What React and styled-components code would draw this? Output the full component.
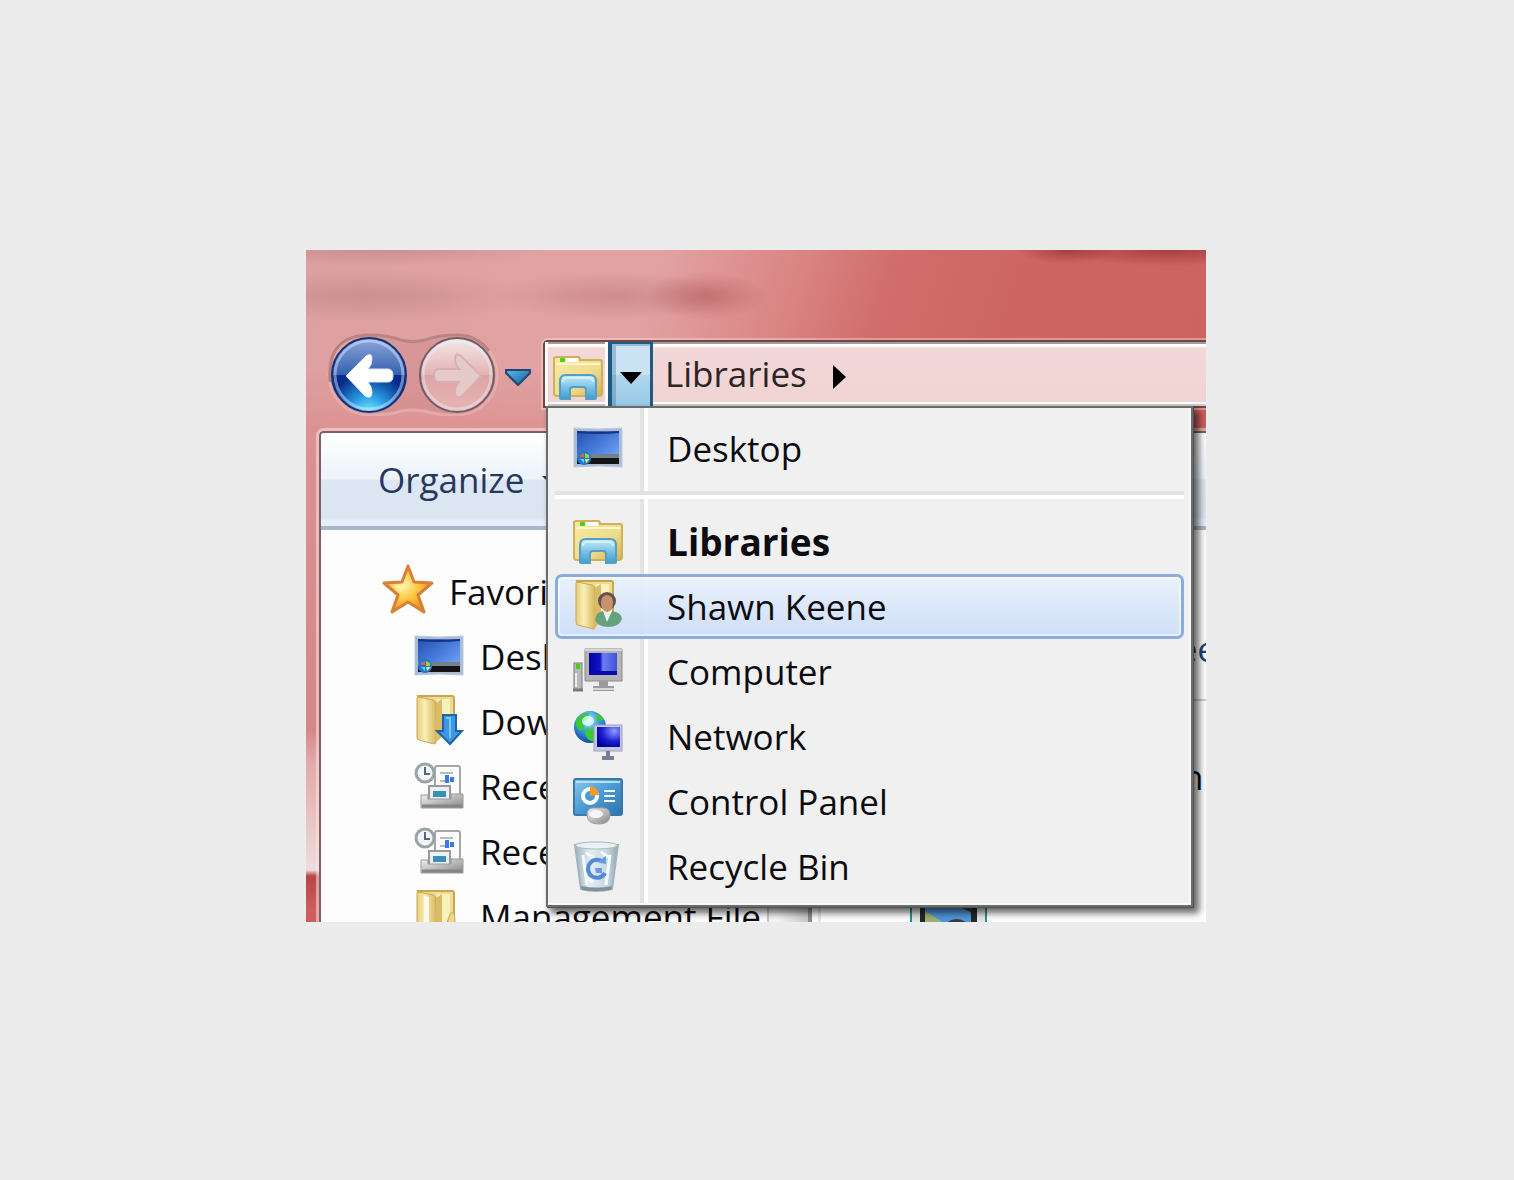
import React from "react";
import styled, { createGlobalStyle, css } from "styled-components";

const GlobalStyle = createGlobalStyle`
  *, *::before, *::after { box-sizing: border-box; }
  body { margin: 0; background: #ececec; }
  button { font: inherit; color: inherit; border: 0; padding: 0; background: none; text-align: left; }
`;

const Page = styled.main`
  display: flex;
  height: 100vh;
  padding: 250px 308px 258px 306px;
  font-family: "Open Sans", "Noto Sans", sans-serif;
  font-size: 35px;
  line-height: 48px;
  color: #0c0c10;
`;

const Explorer = styled.section`
  flex: 1;
  min-width: 0;
  display: flex;
  flex-direction: column;
  overflow: hidden;
  background:
    radial-gradient(ellipse 170px 26px at 60px 46px, rgba(140, 90, 90, 0.24), transparent),
    radial-gradient(ellipse 120px 24px at 310px 46px, rgba(150, 75, 75, 0.26), transparent),
    radial-gradient(ellipse 60px 24px at 400px 46px, rgba(150, 50, 50, 0.34), transparent),
    radial-gradient(ellipse 170px 16px at 70px 0, rgba(140, 90, 90, 0.24), transparent),
    radial-gradient(ellipse 50px 14px at 760px 0, rgba(120, 20, 20, 0.45), transparent),
    radial-gradient(ellipse 110px 16px at 860px 0, rgba(120, 20, 20, 0.45), transparent),
    linear-gradient(180deg, transparent 120px, rgba(200, 70, 70, 0.16) 180px, rgba(190, 90, 90, 0.35) 480px,
      rgba(226, 170, 170, 0.7) 510px, #eedcdc 620px, #b84646 626px, #cc5e5e 660px),
    linear-gradient(108deg, #dea0a0 0, #e2a2a2 340px, #d98382 480px, #d06c69 570px, #cd6663 700px, #c9605c 100%);
`;

const Toolbar = styled.nav`
  display: flex;
  align-items: center;
  padding: 82px 0 0 20px;
`;

const Travel = styled.div`
  display: grid;
  grid-template-columns: 88px 88px;
  width: 178px;
  height: 84px;
  position: relative;
`;

const TravelPlate = styled.svg`
  position: absolute;
  inset: 0;
`;

const TravelButton = styled.button`
  position: relative;
  height: 84px;
  svg { display: block; }
`;

const HistoryButton = styled.button`
  display: grid;
  place-items: center;
  width: 26px;
  height: 32px;
  margin: 6px 13px 0 0;
`;

const AddressBar = styled.div`
  position: relative;
  flex: 1;
  display: flex;
  height: 68px;
  border: solid #6f4747;
  border-width: 2px 0 2px 2px;
  border-radius: 5px 0 0 0;
  box-shadow: 0 0 0 2px rgba(255, 225, 225, 0.4);
  background: linear-gradient(#a39c9d 2px, #fff 2px 4px, #f3d8d9 6px, #f0d3d3 60px, #fff 60px 62px, #d3cccc 62px);
`;

const LocationIcon = styled.div`
  display: grid;
  place-items: center;
  width: 63px;
  padding: 7px 0 0 2px;
  border: solid #fff;
  border-width: 0 3px;
`;

const RootsButton = styled.button`
  display: grid;
  place-items: center;
  width: 45px;
  padding-top: 5px;
  border: solid #205a80;
  border-width: 2px 3px 0 4px;
  background: linear-gradient(#c9e3f5 50%, #b0d7ee 50%, #98cae8);
  box-shadow: inset 4px 2px 0 rgba(60, 110, 145, 0.35);
`;

const Crumb = styled.button`
  padding: 0 26px 0 12px;
  color: #2a2424;
`;

const CrumbArrow = styled.button`
  display: grid;
  place-items: center;
  width: 14px;
  padding-top: 5px;
`;

const Menu = styled.div`
  position: absolute;
  z-index: 2;
  top: 64px;
  left: 1px;
  width: 647px;
  padding: 8px 7px 6px;
  border: 2px solid #6b6d6d;
  background:
    linear-gradient(90deg, transparent 92px, #e3e3e3 92px 96px, #fff 96px 100px, transparent 100px),
    #f0f0f0;
  box-shadow: inset -2px -2px 0 #f8f8f8, 1px 1px 0 0 #4e5050, 5px 5px 7px 1px rgba(0, 0, 0, 0.6);
`;

const MenuItem = styled.button`
  display: flex;
  align-items: center;
  gap: 44px;
  width: 100%;
  height: 65px;
  padding-left: 15px;
  border: 3px solid transparent;
  border-radius: 7px;
  ${(p) =>
    p.$current &&
    css`
      font-size: 37px;
      font-weight: 700;
    `}
  ${(p) =>
    p.$hot &&
    css`
      border-color: #8aaddc;
      background: linear-gradient(rgba(233, 241, 253, 0.9), rgba(203, 221, 248, 0.92)) padding-box;
      box-shadow: inset 0 0 0 2px rgba(255, 255, 255, 0.5);
    `}
`;

const Separator = styled.hr`
  height: 8px;
  margin: 10px 0;
  border: 0;
  background: linear-gradient(#e2e2e2 4px, #fff 4px);
`;

const Frame = styled.div`
  flex: 1;
  min-height: 0;
  display: flex;
  flex-direction: column;
  margin: 15px 0 0 13px;
  border: solid #7b6161;
  border-width: 2px 0 0 2px;
  border-radius: 5px 0 0 0;
  box-shadow: 0 0 0 3px rgba(255, 225, 225, 0.55);
  background: #fdfdfd;
  overflow: hidden;
`;

const CommandBar = styled.div`
  flex: none;
  display: flex;
  align-items: center;
  height: 97px;
  padding: 0 0 0 57px;
  border-bottom: 4px solid #a9b6cc;
  color: #27375c;
  background: linear-gradient(#fff, #ecf3fb 46px, #dde7f3 47px, #dbe4f1 84px, #e6eefa 88px);
`;

const CommandButton = styled.button`
  display: flex;
  align-items: center;
  gap: 18px;
`;

const Columns = styled.div`
  flex: 1;
  min-height: 0;
  display: flex;
  overflow: hidden;
`;

const Sidebar = styled.div`
  width: 491px;
  display: flex;
  overflow: hidden;
`;

const Places = styled.div`
  flex: 1;
  min-width: 0;
  padding-top: 29px;
  border-right: 2px solid #c9c9cc;
`;

const Place = styled.a`
  display: flex;
  align-items: center;
  gap: 16px;
  height: 65px;
  padding-left: ${(p) => (p.$nested ? 93 : 62)}px;
  color: #0c0c10;
  text-decoration: none;
  white-space: nowrap;
`;

const ScrollTrack = styled.div`
  width: 43px;
  border-right: 4px solid #8d8d90;
  background: linear-gradient(90deg, #f4f4f5 8px, #c8c8cc);
`;

const Pane = styled.div`
  flex: 1;
  min-width: 0;
  display: flex;
  flex-direction: column;
  margin-left: 6px;
  border-left: 3px solid #dfe8f4;
`;

const PaneRow = styled.div`
  flex: none;
  display: flex;
  align-items: flex-end;
  height: ${(p) => p.$height}px;
  padding: 0 0 ${(p) => p.$gap}px 340px;
  color: ${(p) => (p.$heading ? "#1f4374" : "#0c0c10")};
  border-bottom: ${(p) => (p.$heading ? "2px solid #c3d0e4" : "0")};
  white-space: nowrap;
`;

const Thumb = styled.div`
  padding: 106px 0 0 89px;
`;

const IconSvg = styled.svg`
  flex: none;
  display: block;
  overflow: visible;
`;

const Icon = ({ children }) => (
  <IconSvg width="50" height="50" viewBox="0 0 50 50" aria-hidden="true">
    {children}
  </IconSvg>
);

const Gradients = () => (
  <IconSvg width="0" height="0" aria-hidden="true">
    <defs>
      <linearGradient id="folder" x1="0" y1="0" x2="1" y2="1">
        <stop offset="0" stopColor="#f6e9a4" />
        <stop offset=".6" stopColor="#efdd8c" />
        <stop offset="1" stopColor="#d6b04c" />
      </linearGradient>
      <linearGradient id="stand" x1="0" y1="0" x2="0" y2="1">
        <stop offset="0" stopColor="#c8ecfa" />
        <stop offset=".5" stopColor="#7fc3e6" />
        <stop offset="1" stopColor="#3f9dd2" />
      </linearGradient>
      <linearGradient id="flap" x1="0" y1="0" x2="1" y2="0">
        <stop offset="0" stopColor="#e6cd7c" />
        <stop offset=".4" stopColor="#f9efb4" />
        <stop offset="1" stopColor="#d7b863" />
      </linearGradient>
      <linearGradient id="wallpaper" x1="0" y1="0" x2="1" y2="1">
        <stop offset="0" stopColor="#2450b0" />
        <stop offset=".5" stopColor="#4a7edc" />
        <stop offset="1" stopColor="#7db2fa" />
      </linearGradient>
      <linearGradient id="crt" x1="0" y1="0" x2="1" y2="0">
        <stop offset="0" stopColor="#0404a4" />
        <stop offset=".4" stopColor="#1212c8" />
        <stop offset=".5" stopColor="#6a80f0" />
        <stop offset="1" stopColor="#4050dc" />
      </linearGradient>
      <radialGradient id="netcrt" cx=".75" cy=".2" r=".9">
        <stop offset="0" stopColor="#8c9cff" />
        <stop offset=".6" stopColor="#1c1ccc" />
        <stop offset="1" stopColor="#0000a0" />
      </radialGradient>
      <linearGradient id="metal" x1="0" y1="0" x2="1" y2="1">
        <stop offset="0" stopColor="#f2f2f2" />
        <stop offset="1" stopColor="#868686" />
      </linearGradient>
      <radialGradient id="globe" cx=".45" cy=".3" r=".75">
        <stop offset="0" stopColor="#b8f0ff" />
        <stop offset=".45" stopColor="#3a9be0" />
        <stop offset="1" stopColor="#123c9c" />
      </radialGradient>
      <linearGradient id="panel" x1="0" y1="0" x2="1" y2="1">
        <stop offset="0" stopColor="#8cc8ec" />
        <stop offset=".5" stopColor="#4a9ad4" />
        <stop offset="1" stopColor="#2e72b0" />
      </linearGradient>
      <linearGradient id="glass" x1="0" y1="0" x2="1" y2="0">
        <stop offset="0" stopColor="#9fb2bc" />
        <stop offset=".35" stopColor="#e2edf2" />
        <stop offset=".75" stopColor="#c6d8e0" />
        <stop offset="1" stopColor="#90a6b0" />
      </linearGradient>
      <radialGradient id="gold" cx=".4" cy=".42" r=".55">
        <stop offset="0" stopColor="#fff6a8" />
        <stop offset=".6" stopColor="#fcc23c" />
        <stop offset="1" stopColor="#f0962a" />
      </radialGradient>
      <linearGradient id="blueTop" x1="0" y1="0" x2="0" y2="1">
        <stop offset="0" stopColor="#8fa6dc" />
        <stop offset="1" stopColor="#3560ae" />
      </linearGradient>
      <radialGradient id="blueLow" gradientUnits="userSpaceOnUse" cx="43" cy="82" r="46">
        <stop offset="0" stopColor="#7cf0ff" />
        <stop offset=".4" stopColor="#2c9ce6" />
        <stop offset=".9" stopColor="#052c88" />
      </radialGradient>
      <linearGradient id="pinkTop" x1="0" y1="0" x2="0" y2="1">
        <stop offset="0" stopColor="#f6e8e8" />
        <stop offset="1" stopColor="#e2b2b2" />
      </linearGradient>
      <linearGradient id="pinkLow" x1="0" y1="0" x2="0" y2="1">
        <stop offset="0" stopColor="#cf9496" />
        <stop offset="1" stopColor="#eab4b4" />
      </linearGradient>
      <linearGradient id="chevron" x1="0" y1="0" x2="1" y2="1">
        <stop offset="0" stopColor="#58bce4" />
        <stop offset="1" stopColor="#155a9c" />
      </linearGradient>
    </defs>
  </IconSvg>
);

const LibrariesIcon = () => (
  <Icon>
    <path d="M1 9V6q0-2 2-2h22q2 0 2 3h20q2 0 2 2v31q0 3-3 3H4q-3 0-3-3z" fill="url(#folder)" stroke="#cdb25a" strokeWidth="2" />
    <path d="M3 11h44" stroke="#fff8cc" strokeWidth="2" />
    <rect x="13" y="5" width="12" height="4" fill="#fff" />
    <rect x="7" y="5" width="5" height="4" rx="1" fill="#4bd21c" />
    <path d="M7 45V28q0-6 6-6h24q6 0 6 6v17q0 1-1 1H33V37q0-3-3-3H20q-3 0-3 3v9H8q-1 0-1-1z" fill="url(#stand)" stroke="#559fc6" strokeWidth="2" />
    <path d="M10 29q0-4 4-4h22q4 0 4 4" fill="none" stroke="#d4f0fc" strokeWidth="2" />
  </Icon>
);

const DesktopIcon = () => (
  <Icon>
    <path d="M1 4q24 2 48 0v39q-24-2-48 0z" fill="#a9bcd6" stroke="#bdc9dc" strokeWidth="1" />
    <path d="M4 7q21 1 42 0v33H4z" fill="url(#wallpaper)" />
    <path d="M4 7q21 1 42 0v2q-21 2-42 0z" fill="#12348a" />
    <path d="M4 30h42v4H4z" fill="#77818a" />
    <path d="M4 34h42v6H4z" fill="#141414" />
    <circle cx="11" cy="34" r="7" fill="#1f78d0" />
    <path d="M7 31l4-2v4H7z" fill="#f06028" />
    <path d="M12 29l4 2v3h-4z" fill="#8cd84c" />
    <path d="M7 35h4v4z" fill="#5ad0ff" />
    <path d="M12 35h5l-4 4z" fill="#ffe05c" />
  </Icon>
);

const FolderShape = () => (
  <>
    <path d="M4 -1h34q2 0 2 2v36H20z" fill="#efdc92" stroke="#c9a551" strokeWidth="2" />
    <path d="M23 2h13v30H23z" fill="#f9f1bc" />
    <path d="M4 0l15 3q3 1 3 4v38q0 2-2 2L5 43q-2 0-2-3V1q0-1 1-1z" fill="url(#flap)" stroke="#cba751" strokeWidth="1" />
    <path d="M22 6l6-4v38l-7 6z" fill="#d9bb68" />
  </>
);

const UserIcon = () => (
  <Icon>
    <FolderShape />
    <path d="M22 38q1-8 8-9h9q9 1 10 8-3 8-14 8-10 0-13-7z" fill="#67a07c" />
    <path d="M30 29l4 11 5-11z" fill="#e6f2ee" />
    <circle cx="34" cy="19" r="9" fill="#66544a" />
    <path d="M28 20q0-6 6-7 6 1 6 7 0 9-6 10-6-1-6-10z" fill="#c7936c" />
  </Icon>
);

const DownloadsIcon = () => (
  <Icon>
    <FolderShape />
    <path d="M29 18h13v16h6L36 47 23 34h6z" fill="#3c98e4" stroke="#2263a6" strokeWidth="2" />
    <path d="M32 21h4v20" fill="none" stroke="#7cc8fa" strokeWidth="2" />
  </Icon>
);

const ComputerIcon = () => (
  <Icon>
    <rect x="1" y="16" width="8" height="27" fill="#b9b9b9" stroke="#7d7d7d" />
    <rect x="3" y="17" width="4" height="5" fill="#46d012" />
    <path d="M3 26v14" stroke="#eee" strokeWidth="2" />
    <path d="M0 43h10" stroke="#777" strokeWidth="3" />
    <path d="M12 2h37v32H12z" fill="#b4b4b4" stroke="#8a8a8a" />
    <path d="M12 3h37" stroke="#d6d6d6" strokeWidth="2" />
    <rect x="16" y="6" width="28" height="22" fill="url(#crt)" />
    <path d="M16 24h28v4H16z" fill="#0c0cac" />
    <path d="M26 34h9v5h6v5H20v-5h6z" fill="#9c9c9c" />
    <path d="M20 42h21" stroke="#d8d8d8" strokeWidth="2" />
  </Icon>
);

const NetworkIcon = () => (
  <Icon>
    <circle cx="17" cy="15" r="16" fill="url(#globe)" />
    <path d="M3 8q6-8 13-7l-1 6-6 4 3 4-5 4q-5-4-4-11zM13 16l8 1v13q-8-2-9-9zM23 1q6 2 8 7l-7 1z" fill="#3bc93a" />
    <ellipse cx="15" cy="9" rx="6" ry="5" fill="#e2ffff" opacity=".8" />
    <rect x="21" y="13" width="28" height="26" fill="#c4c8de" stroke="#9a9fc0" />
    <rect x="24" y="15" width="23" height="20" fill="url(#netcrt)" />
    <path d="M33 39h4v5h4v4H29v-4h4z" fill="#777c9c" />
  </Icon>
);

const ControlPanelIcon = () => (
  <Icon>
    <rect x="1" y="2" width="48" height="36" rx="2" fill="url(#panel)" stroke="#3a78aa" strokeWidth="2" />
    <path d="M3 5h44" stroke="#b6def4" strokeWidth="2" />
    <circle cx="17" cy="19" r="7" fill="#4a9ad4" stroke="#fff" strokeWidth="4" />
    <path d="M17 19V9a10 10 0 0 1 9 9z" fill="#f59a26" />
    <path d="M31 14h11M31 19h11M31 24h11" stroke="#fff" strokeWidth="2" />
    <path d="M14 38q0-7 6-7h10q7 0 7 7 0 9-11 9-12 0-12-9z" fill="url(#metal)" stroke="#a2a2a2" />
    <ellipse cx="23" cy="37" rx="7" ry="4" fill="#f6f6f6" />
  </Icon>
);

const RecycleIcon = () => (
  <Icon>
    <path d="M2 3h43l-6 44q-16 4-31 0z" fill="url(#glass)" stroke="#a3b3bb" strokeWidth="2" />
    <path d="M2 3q4-3 21-3t22 3q-3 4-22 4T2 3z" fill="#e9f0f2" stroke="#a9b7be" strokeWidth="1" />
    <path d="M10 13l4 30M37 13l-4 30M13 11l8 5M28 10l7 5M14 36l6 4" stroke="#f4fafc" strokeWidth="3" />
    <path d="M8 44q16 3 31 0l-1 4q-15 2-29 0z" fill="#7f929c" />
    <path d="M30 20a9 9 0 1 0 2 11" fill="none" stroke="#5587da" strokeWidth="4" />
    <path d="M24 20l9 2v-8zM22 26h7v5h-6z" fill="#6b98e2" />
  </Icon>
);

const StarIcon = () => (
  <Icon>
    <path d="M25 -1l6 16 18 1-14 12 6 17-16-10-16 10 6-17L1 16l18-1z" fill="url(#gold)" stroke="#d98038" strokeWidth="3" strokeLinejoin="round" />
    <path d="M25 5l-4 13-12 1 9 7z" fill="#fff4ac" opacity=".6" />
  </Icon>
);

const RecentIcon = () => (
  <Icon>
    <rect x="21" y="4" width="25" height="36" rx="2" fill="#fbfbfb" stroke="#a6a6a6" strokeWidth="2" />
    <path d="M26 11h13M26 19h6" stroke="#bababa" strokeWidth="2" />
    <path d="M33 13v8M38 15v5" stroke="#3a78ec" strokeWidth="4" />
    <rect x="15" y="24" width="21" height="16" fill="#e9f1f6" stroke="#999" strokeWidth="2" />
    <path d="M19 29h13v6H19z" fill="#3a90b8" />
    <path d="M7 33h7v4h23v-5h12v14H7z" fill="url(#metal)" stroke="#9a9a9a" />
    <path d="M8 44h40" stroke="#858585" strokeWidth="3" />
    <circle cx="11" cy="11" r="9" fill="#f1f6f8" stroke="#9ca3a6" strokeWidth="3" />
    <path d="M11 5v7h5" fill="none" stroke="#4e6a84" strokeWidth="2" />
  </Icon>
);

const FolderIcon = () => (
  <Icon>
    <FolderShape />
    <path d="M10 4l5 1v34l-5-6z" fill="#fffbe8" />
    <path d="M36 22q5-6 5 8v14H29z" fill="#ecd784" stroke="#cba751" />
  </Icon>
);

const Circle = ({ top, low, rim }) => (
  <>
    <circle cx="43" cy="43" r="37" fill={`url(#${low})`} />
    <path d="M6 43a37 37 0 0 1 74 0z" fill={`url(#${top})`} />
    <circle cx="43" cy="43" r="34" fill="none" stroke="#e4f0ff" strokeOpacity=".45" strokeWidth="3" />
    <circle cx="43" cy="43" r="37" fill="none" stroke={rim} strokeWidth="2" />
  </>
);

const roots = [
  { label: "Libraries", icon: LibrariesIcon, current: true },
  { label: "Shawn Keene", icon: UserIcon, hot: true },
  { label: "Computer", icon: ComputerIcon },
  { label: "Network", icon: NetworkIcon },
  { label: "Control Panel", icon: ControlPanelIcon },
  { label: "Recycle Bin", icon: RecycleIcon },
];

const places = [
  { label: "Favorites", icon: StarIcon },
  { label: "Desktop", icon: DesktopIcon, nested: true },
  { label: "Downloads", icon: DownloadsIcon, nested: true },
  { label: "Recent", icon: RecentIcon, nested: true },
  { label: "Recent", icon: RecentIcon, nested: true },
  { label: "Management File", icon: FolderIcon, nested: true },
];

export default function App() {
  return (
    <Page>
      <GlobalStyle />
      <Explorer>
        <Gradients />
        <Toolbar aria-label="Navigation">
          <Travel>
            <TravelPlate width="180" height="84" viewBox="0 0 180 84" aria-hidden="true">
              <path d="M43 3q20 0 32 5 12 3 24 0 12-5 32-5a40 40 0 0 1 0 80q-20 0-32-4-12-2-24 0-12 4-32 4a40 40 0 0 1 0-80z" fill="#c48080" fillOpacity=".3" stroke="#f4caca" strokeOpacity=".4" strokeWidth="3" />
              <path d="M4 50Q0 4 43 3q20 0 32 5 12 3 24 0 12-5 32-5 20 0 32 16" fill="none" stroke="#925858" strokeOpacity=".5" strokeWidth="3" />
            </TravelPlate>
            <TravelButton aria-label="Back">
              <svg width="88" height="84" viewBox="0 0 88 84">
                <Circle top="blueTop" low="blueLow" rim="#16307c" />
                <path d="M20 44l20-20q6-4 6 3 0 6-4 10h20q5 0 5 7 0 6-5 6H42q4 5 4 10 0 8-7 4z" fill="#fff" stroke="#dce6f2" />
              </svg>
            </TravelButton>
            <TravelButton aria-label="Forward">
              <svg width="88" height="84" viewBox="0 0 88 84">
                <Circle top="pinkTop" low="pinkLow" rim="#745c62" />
                <path d="M67 44L47 24q-6-4-6 3 0 6 4 10H25q-5 0-5 7 0 6 5 6h20q-4 5-4 10 0 8 7 4z" fill="#e6caca" stroke="#d8b0b2" strokeWidth="2" />
              </svg>
            </TravelButton>
          </Travel>
          <HistoryButton aria-label="Recent pages">
            <svg width="28" height="18" viewBox="0 0 28 18">
              <path d="M2 2h24v3L14 17 2 5z" fill="url(#chevron)" stroke="#1e4776" strokeWidth="2" strokeLinejoin="round" />
            </svg>
          </HistoryButton>
          <AddressBar>
            <LocationIcon>
              <LibrariesIcon />
            </LocationIcon>
            <RootsButton aria-label="Choose a location" aria-expanded="true">
              <svg width="22" height="12" viewBox="0 0 22 12">
                <path d="M0 0h22L11 12z" fill="#000" />
              </svg>
            </RootsButton>
            <Crumb>Libraries</Crumb>
            <CrumbArrow aria-label="Show libraries">
              <svg width="13" height="24" viewBox="0 0 13 24">
                <path d="M0 0v24l13-12z" fill="#000" />
              </svg>
            </CrumbArrow>
            <Menu role="menu">
              <MenuItem role="menuitem">
                <DesktopIcon />
                Desktop
              </MenuItem>
              <Separator />
              {roots.map(({ label, icon: Glyph, current, hot }) => (
                <MenuItem key={label} role="menuitem" $current={current} $hot={hot}>
                  <Glyph />
                  {label}
                </MenuItem>
              ))}
            </Menu>
          </AddressBar>
        </Toolbar>
        <Frame>
          <CommandBar>
            <CommandButton>
              Organize
              <svg width="16" height="8" viewBox="0 0 16 8" aria-hidden="true">
                <path d="M0 0h16L8 8z" fill="#27375c" />
              </svg>
            </CommandButton>
          </CommandBar>
          <Columns>
            <Sidebar>
              <Places>
                {places.map(({ label, icon: Glyph, nested }, i) => (
                  <Place key={i} href="#" $nested={nested}>
                    <Glyph />
                    {label}
                  </Place>
                ))}
              </Places>
              <ScrollTrack />
            </Sidebar>
            <Pane>
              <PaneRow $heading $height={171} $gap={26}>see</PaneRow>
              <PaneRow $height={100} $gap={0}>on</PaneRow>
              <Thumb>
                <svg width="77" height="60" viewBox="0 0 77 60" aria-hidden="true">
                  <path d="M0 0h77v60H0z" fill="#2e8f86" />
                  <path d="M2 0h8v60H2zM67 0h8v60h-8z" fill="#e2e6e6" />
                  <path d="M10 0h57v60H10z" fill="#26282c" />
                  <path d="M15 0h46v60H15z" fill="#4f97dc" />
                  <path d="M15 4l16 10v46H15z" fill="#a0b070" />
                  <path d="M34 18q12-12 26 0v42H34zM50 0h12v6z" fill="#3a3c40" />
                </svg>
              </Thumb>
            </Pane>
          </Columns>
        </Frame>
      </Explorer>
    </Page>
  );
}
